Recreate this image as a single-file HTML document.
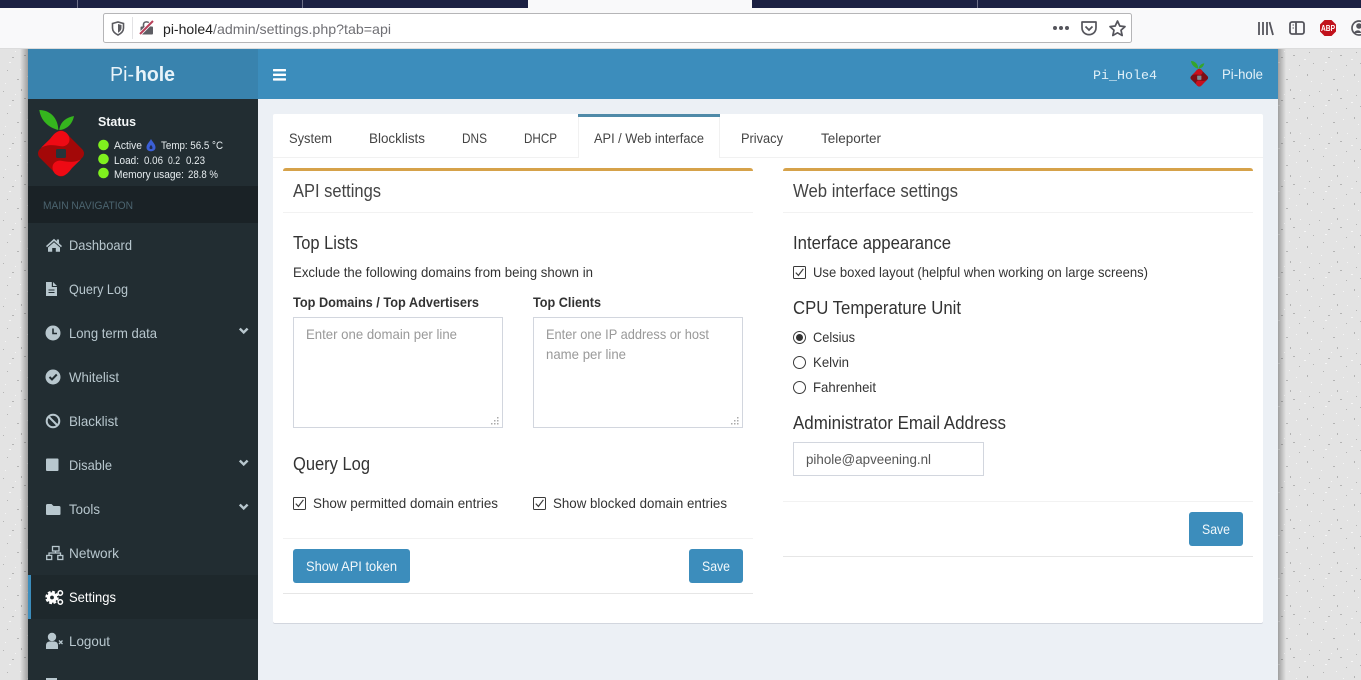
<!DOCTYPE html>
<html lang="en"><head><meta charset="utf-8"><title>Pi-hole Settings</title>
<style>
html,body{margin:0;padding:0;width:1361px;height:680px;overflow:hidden;background:#fff}
svg{display:block;font-family:"Liberation Sans",sans-serif}
text{white-space:pre}
.s14{font-size:14px}.s18{font-size:18px}.s11{font-size:11px}
.d{fill:#444}.n{fill:#b8c7ce;font-size:14px}.p{fill:#999;font-size:14px}.w{fill:#fff}
.b{font-weight:bold}
</style></head><body>
<svg width="1361" height="680" viewBox="0 0 1361 680" xmlns="http://www.w3.org/2000/svg">
<defs>
<pattern id="noise" x="0" y="0" width="47" height="43" patternUnits="userSpaceOnUse">
<g fill="#b4b4b4">
<rect x="3" y="5" width="1" height="1"/><rect x="12" y="14" width="2" height="1"/><rect x="21" y="3" width="1" height="2"/><rect x="30" y="22" width="1" height="1"/><rect x="7" y="27" width="1" height="1"/><rect x="17" y="36" width="2" height="1"/><rect x="40" y="9" width="1" height="1"/><rect x="38" y="31" width="1" height="2"/><rect x="24" y="12" width="2" height="1"/><rect x="44" y="20" width="1" height="1"/>
</g>
<g fill="#f6f6f6">
<rect x="15" y="8" width="1" height="1"/><rect x="35" y="16" width="2" height="1"/><rect x="5" y="40" width="1" height="1"/><rect x="27" y="33" width="1" height="1"/><rect x="9" y="19" width="2" height="1"/><rect x="42" y="38" width="1" height="1"/><rect x="31" y="4" width="1" height="1"/><rect x="20" y="26" width="1" height="1"/>
</g>
</pattern>
<linearGradient id="shL" x1="0" x2="1"><stop offset="0" stop-color="#000" stop-opacity="0"/><stop offset="1" stop-color="#000" stop-opacity=".3"/></linearGradient>
<linearGradient id="shR" x1="1" x2="0"><stop offset="0" stop-color="#000" stop-opacity="0"/><stop offset="1" stop-color="#000" stop-opacity=".3"/></linearGradient>
<symbol id="cb" viewBox="0 0 13 13" overflow="visible">
<rect x=".5" y=".5" width="12" height="12" rx="1" fill="#fff" stroke="#3a3a3a"/>
<path d="M2.8 6.6 L5.4 9.4 L10.4 2.8" fill="none" stroke="#3a3a3a" stroke-width="1.2"/>
</symbol>
<g id="grip" fill="#aaa"><rect x="6" y="0" width="1.5" height="1.5"/><rect x="3" y="3" width="1.5" height="1.5"/><rect x="6" y="3" width="1.5" height="1.5"/><rect x="0" y="6" width="1.5" height="1.5"/><rect x="3" y="6" width="1.5" height="1.5"/><rect x="6" y="6" width="1.5" height="1.5"/></g>
<path id="chev" d="M-4.800 -1.600 L-3 -3.300 L0 -0.300 L3 -3.300 L4.800 -1.600 L0 3.100Z"/>
<path id="lobe" d="M61 131 C66 131 69.500 135 69.500 139.500 C69.500 144 65.500 146.800 61 146.300 C55 145.500 49 143.500 41 147.800 L50 139 C53 135 56 131 61 131Z"/>
</defs>

<!-- browser chrome -->
<rect width="1361" height="8" fill="#1c2143"/>
<rect x="528" y="0" width="224" height="8" fill="#f9f9fa"/>
<g fill="#6d7088"><rect x="77" width="1" height="8"/><rect x="302" width="1" height="8"/><rect x="977" width="1" height="8"/></g>
<rect y="8" width="1361" height="40" fill="#f9f9fa"/>
<rect x="103.500" y="13.500" width="1028" height="29" rx="2" fill="#fff" stroke="#b5b5b7"/>
<path d="M112.500 23.500 L118 22 L123.500 23.500 V28 C123.500 31.500 120.500 33.800 118 35 C115.500 33.800 112.500 31.500 112.500 28Z" fill="none" stroke="#5b5b60" stroke-width="1.6"/>
<path d="M118 24 L121.500 25 V28 C121.500 30 119.700 31.800 118 32.700Z" fill="#5b5b60"/>
<rect x="132" y="17" width="1" height="22" fill="#e2e2e4"/>
<rect x="140.500" y="26.500" width="12.500" height="8" rx="1" fill="#5e5e64"/>
<path d="M143.500 27 V24.500 C143.500 21 149.500 21 149.500 24.500 V27" fill="none" stroke="#5e5e64" stroke-width="1.600"/>
<path d="M140 34 L153 21" stroke="#fff" stroke-width="3.600"/>
<path d="M140 34 L153 21" stroke="#b8405a" stroke-width="2"/>
<text x="163" y="34" class="s14" fill="#222" textLength="50" lengthAdjust="spacingAndGlyphs">pi-hole4</text>
<text x="213" y="34" class="s14" fill="#707075" textLength="178" lengthAdjust="spacingAndGlyphs">/admin/settings.php?tab=api</text>
<g fill="#55555c"><circle cx="1055" cy="28" r="2"/><circle cx="1061" cy="28" r="2"/><circle cx="1067" cy="28" r="2"/></g>
<path d="M1082 22 H1096 V27.500 C1096 37 1082 37 1082 27.500Z" fill="none" stroke="#55555c" stroke-width="1.700" stroke-linejoin="round"/>
<path d="M1085.500 26.500 L1089 30 L1092.500 26.500" fill="none" stroke="#55555c" stroke-width="1.700"/>
<path d="M1117.500 21 L1119.800 26 L1125 26.600 L1121 30.200 L1122.200 35.500 L1117.500 32.800 L1112.800 35.500 L1114 30.200 L1110 26.600 L1115.200 26Z" fill="none" stroke="#55555c" stroke-width="1.700" stroke-linejoin="round"/>
<g fill="none" stroke="#55555c" stroke-width="1.800"><path d="M1259 22 V35 M1263 22 V35 M1267 22 V35 M1269.500 22 L1273 35"/><rect x="1290" y="22" width="14" height="12" rx="2"/><path d="M1296 22 V34"/><path d="M1292.500 25 H1294 M1292.500 28 H1294" stroke-width="1"/></g>
<path d="M1324.500 20 H1331.500 L1336 24.500 V31.500 L1331.500 36 H1324.500 L1320 31.500 V24.500Z" fill="#c1121c"/>
<text x="1321" y="31" font-size="8" font-weight="bold" fill="#fff" textLength="14" lengthAdjust="spacingAndGlyphs">ABP</text>
<circle cx="1359" cy="28" r="7" fill="none" stroke="#55555c" stroke-width="1.700"/><circle cx="1359" cy="26" r="2.800" fill="#55555c"/><path d="M1354 33 C1355 29.500 1361 29.500 1361 33Z" fill="#55555c"/>

<!-- page background -->
<rect x="0" y="48" width="28" height="632" fill="#e3e3e3"/>
<rect x="1278" y="48" width="83" height="632" fill="#e3e3e3"/>
<rect y="48" width="1361" height="632" fill="url(#noise)"/>
<rect y="48" width="1361" height="1" fill="#dcdcdc"/>
<rect x="20" y="49" width="8" height="631" fill="url(#shL)"/>
<rect x="1278" y="49" width="8" height="631" fill="url(#shR)"/>

<!-- frame -->
<rect x="28" y="49" width="1250" height="631" fill="#ecf0f5"/>
<rect x="28" y="49" width="1250" height="50" fill="#3c8dbc"/>
<rect x="28" y="49" width="230" height="50" fill="#3983ae"/>
<rect x="28" y="99" width="230" height="581" fill="#222d32"/>
<rect x="28" y="186" width="230" height="37" fill="#1a2226"/>
<rect x="28" y="575" width="230" height="44" fill="#1e282c"/>
<rect x="28" y="575" width="3" height="44" fill="#3c8dbc"/>

<!-- header -->
<text x="110" y="81" font-size="20" fill="#e8f3f9" textLength="24" lengthAdjust="spacingAndGlyphs">Pi-</text>
<text x="135" y="81" font-size="20" font-weight="bold" fill="#e8f3f9" textLength="40" lengthAdjust="spacingAndGlyphs">hole</text>
<g fill="#fff"><rect x="273" y="69" width="13" height="2.400" rx=".6"/><rect x="273" y="73.600" width="13" height="2.400" rx=".6"/><rect x="273" y="78.200" width="13" height="2.400" rx=".6"/></g>
<text x="1093" y="79" font-family="Liberation Mono, monospace" font-size="13" fill="#dff0f8" textLength="64" lengthAdjust="spacingAndGlyphs">Pi_Hole4</text>
<text x="1222" y="79" class="s14" fill="#e4f1f8" textLength="41" lengthAdjust="spacingAndGlyphs">Pi-hole</text>
<g transform="translate(1199.300 77.700) scale(.385) translate(-61 -153.500)">
<path d="M58.300 130 C50 128 41 122 39.300 110 C50 110 58 118 58.300 130Z" fill="#35a52c"/>
<path d="M59.300 130 C60 122 66 117.500 74 116 C72.500 124 67 129.500 59.300 130Z" fill="#35a52c"/>
<rect x="43" y="135.500" width="36" height="36" rx="6" fill="#7d0e16" transform="rotate(45 61 153.500)"/>
<use href="#lobe" fill="#c8101e"/>
<use href="#lobe" fill="#c8101e" transform="rotate(180 61 153.500)"/>
<rect x="55.500" y="148" width="11" height="11" rx="1.500" fill="#7d8c95"/>
</g>

<!-- big logo -->
<path d="M58.300 130 C50 128 41 122 39.300 110 C50 110 58 118 58.300 130Z" fill="#35b51e"/>
<path d="M59.300 130 C60 122 66 117.500 74 116 C72.500 124 67 129.500 59.300 130Z" fill="#35b51e"/>
<rect x="43" y="135.500" width="36" height="36" rx="6" fill="#a30808" transform="rotate(45 61 153.500)"/>
<use href="#lobe" fill="#ee0a14"/>
<use href="#lobe" fill="#ee0a14" transform="rotate(180 61 153.500)"/>
<rect x="56" y="149" width="10" height="9" rx="1.500" fill="#25343a"/>

<!-- status -->
<text x="98" y="126" font-size="13" font-weight="bold" fill="#f4f7f8" textLength="38" lengthAdjust="spacingAndGlyphs">Status</text>
<g fill="#7ff01e"><circle cx="103.500" cy="145" r="5.300"/><circle cx="103.500" cy="159" r="5.300"/><circle cx="103.500" cy="173" r="5.300"/></g>
<path d="M151 139 C152.500 142 155.500 144 155.500 147.500 C155.500 152.500 146.500 152.500 146.500 147.500 C146.500 144 149.500 142 151 139Z" fill="#3b5fd6"/>
<path d="M151 145 C152 146 152.500 147 152.500 148 C152.500 149.500 149.500 149.500 149.500 148 C149.500 147 150 146 151 145Z" fill="#1f2b52"/>
<g class="s11" fill="#e6ecef">
<text x="114" y="149" textLength="28" lengthAdjust="spacingAndGlyphs">Active</text>
<text x="161" y="149" textLength="62" lengthAdjust="spacingAndGlyphs">Temp: 56.5 °C</text>
<text x="114" y="164" textLength="25" lengthAdjust="spacingAndGlyphs">Load:</text>
<text x="144" y="164" textLength="19" lengthAdjust="spacingAndGlyphs">0.06</text>
<text x="168" y="164" textLength="12" lengthAdjust="spacingAndGlyphs">0.2</text>
<text x="186" y="164" textLength="19" lengthAdjust="spacingAndGlyphs">0.23</text>
<text x="114" y="178" textLength="70" lengthAdjust="spacingAndGlyphs">Memory usage:</text>
<text x="188" y="178" textLength="30" lengthAdjust="spacingAndGlyphs">28.8 %</text>
</g>
<text x="43" y="209" font-size="11" fill="#4b646f" textLength="90" lengthAdjust="spacingAndGlyphs">MAIN NAVIGATION</text>

<!-- nav icons -->
<g fill="#b8c7ce">
<path d="M46 246 L54 238.800 L56.800 241.300 V239.500 H59 V243.300 L62 246 L61 247.200 L54 241 L47 247.200Z"/>
<path d="M48 247.500 L54 242.300 L60 247.500 V251.800 H55.800 V248 H52.200 V251.800 H48Z"/>
<path d="M46 282 H51.800 V287 H57 V296 H46Z M53 282 L57 286 H53Z"/>
<rect x="48.500" y="289.500" width="6" height="1" fill="#222d32"/><rect x="48.500" y="292" width="6" height="1" fill="#222d32"/>
<circle cx="53" cy="333" r="7.500"/>
<circle cx="53" cy="377" r="7.500"/>
<rect x="46" y="458.500" width="12.500" height="12.500" rx="1"/>
<path d="M46 505.500 Q46 504 47.500 504 H51.500 L53.500 506 H59 Q60.500 506 60.500 507.500 V514 Q60.500 515 59 515 H47.500 Q46 515 46 514Z"/>
</g>
<path d="M53 328.500 V333.500 H57" fill="none" stroke="#222d32" stroke-width="1.600"/>
<path d="M49.500 377 L52 379.500 L56.800 374.500" fill="none" stroke="#222d32" stroke-width="2"/>
<g fill="none" stroke="#b8c7ce" stroke-width="2"><circle cx="53" cy="421" r="6.300"/><path d="M48.500 416.500 L57.500 425.500"/></g>
<g fill="none" stroke="#b8c7ce" stroke-width="1.300">
<rect x="52.500" y="546.500" width="6.500" height="4.500"/><rect x="46.700" y="555.500" width="5" height="4"/><rect x="57.800" y="555.500" width="5" height="4"/>
<path d="M55.500 551 V553 M49 555.500 V553 H60.500 V555.500"/>
</g>
<circle cx="52" cy="597.500" r="5.200" fill="#fff"/>
<circle cx="52" cy="597.500" r="5.800" fill="none" stroke="#fff" stroke-width="1.800" stroke-dasharray="2.900 1.650"/>
<circle cx="52" cy="597.500" r="1.900" fill="#1e282c"/>
<circle cx="60.300" cy="593" r="2.200" fill="none" stroke="#fff" stroke-width="1.500"/>
<circle cx="60.300" cy="602" r="2.200" fill="none" stroke="#fff" stroke-width="1.500"/>
<g fill="#b8c7ce"><circle cx="52" cy="637" r="4.200"/><path d="M46 649 V645.500 C46 642.500 48 641.500 50 641.500 H54 C56 641.500 58 642.500 58 645.500 V649Z"/><rect x="46" y="678" width="11" height="2"/></g>
<path d="M59 640.500 L62.500 644 M62.500 640.500 L59 644" stroke="#b8c7ce" stroke-width="1.300"/>
<g fill="#b8c7ce"><use href="#chev" x="243.700" y="331"/><use href="#chev" x="243.700" y="463"/><use href="#chev" x="243.700" y="507"/></g>

<!-- nav text -->
<text x="69" y="250" class="n" textLength="63" lengthAdjust="spacingAndGlyphs">Dashboard</text>
<text x="69" y="294" class="n" textLength="59" lengthAdjust="spacingAndGlyphs">Query Log</text>
<text x="69" y="338" class="n" textLength="88" lengthAdjust="spacingAndGlyphs">Long term data</text>
<text x="69" y="382" class="n" textLength="50" lengthAdjust="spacingAndGlyphs">Whitelist</text>
<text x="69" y="426" class="n" textLength="49" lengthAdjust="spacingAndGlyphs">Blacklist</text>
<text x="69" y="470" class="n" textLength="43" lengthAdjust="spacingAndGlyphs">Disable</text>
<text x="69" y="514" class="n" textLength="31" lengthAdjust="spacingAndGlyphs">Tools</text>
<text x="69" y="558" class="n" textLength="50" lengthAdjust="spacingAndGlyphs">Network</text>
<text x="69" y="602" class="s14 w" textLength="47" lengthAdjust="spacingAndGlyphs">Settings</text>
<text x="69" y="646" class="n" textLength="41" lengthAdjust="spacingAndGlyphs">Logout</text>

<!-- card -->
<rect x="273" y="115" width="990" height="509" rx="2" fill="#d2d6de"/>
<rect x="273" y="114" width="990" height="509" rx="2" fill="#fff"/>
<rect x="273" y="157" width="990" height="1" fill="#f1f1f1"/>
<rect x="578" y="117" width="142" height="41" fill="#fff"/>
<rect x="578" y="117" width="1" height="41" fill="#f1f1f1"/><rect x="719" y="117" width="1" height="41" fill="#f1f1f1"/>
<rect x="578" y="114" width="142" height="3" fill="#4f8aa8"/>
<g class="s14" fill="#444">
<text x="289" y="143" textLength="43" lengthAdjust="spacingAndGlyphs">System</text>
<text x="369" y="143" textLength="56" lengthAdjust="spacingAndGlyphs">Blocklists</text>
<text x="462" y="143" textLength="25" lengthAdjust="spacingAndGlyphs">DNS</text>
<text x="524" y="143" textLength="33" lengthAdjust="spacingAndGlyphs">DHCP</text>
<text x="594" y="143" textLength="110" lengthAdjust="spacingAndGlyphs">API / Web interface</text>
<text x="741" y="143" textLength="42" lengthAdjust="spacingAndGlyphs">Privacy</text>
<text x="821" y="143" textLength="60" lengthAdjust="spacingAndGlyphs">Teleporter</text>
</g>

<!-- left box -->
<path d="M283 171 Q283 168 286 168 H750 Q753 168 753 171Z" fill="#d6a24a"/>
<rect x="283" y="212" width="470" height="1" fill="#f2f2f2"/>
<rect x="283" y="538" width="470" height="1" fill="#f2f2f2"/>
<rect x="283" y="593" width="470" height="1" fill="#e6e6e6"/>
<text x="293" y="197" class="s18 d" textLength="88" lengthAdjust="spacingAndGlyphs">API settings</text>
<text x="293" y="249" class="s18" fill="#333" textLength="65" lengthAdjust="spacingAndGlyphs">Top Lists</text>
<text x="293" y="277" class="s14" fill="#333" textLength="300" lengthAdjust="spacingAndGlyphs">Exclude the following domains from being shown in</text>
<text x="293" y="307" class="s14 b" fill="#333" textLength="186" lengthAdjust="spacingAndGlyphs">Top Domains / Top Advertisers</text>
<text x="533" y="307" class="s14 b" fill="#333" textLength="68" lengthAdjust="spacingAndGlyphs">Top Clients</text>
<rect x="293.500" y="317.500" width="209" height="110" fill="#fff" stroke="#d2d6de"/>
<rect x="533.500" y="317.500" width="209" height="110" fill="#fff" stroke="#d2d6de"/>
<use href="#grip" x="491" y="417"/><use href="#grip" x="731" y="417"/>
<text x="306" y="339" class="p" textLength="151" lengthAdjust="spacingAndGlyphs">Enter one domain per line</text>
<text x="546" y="339" class="p" textLength="163" lengthAdjust="spacingAndGlyphs">Enter one IP address or host</text>
<text x="546" y="359" class="p" textLength="80" lengthAdjust="spacingAndGlyphs">name per line</text>
<text x="293" y="470" class="s18" fill="#333" textLength="77" lengthAdjust="spacingAndGlyphs">Query Log</text>
<use href="#cb" x="293" y="497" width="13" height="13"/>
<use href="#cb" x="533" y="497" width="13" height="13"/>
<text x="313" y="508" class="s14" fill="#333" textLength="185" lengthAdjust="spacingAndGlyphs">Show permitted domain entries</text>
<text x="553" y="508" class="s14" fill="#333" textLength="174" lengthAdjust="spacingAndGlyphs">Show blocked domain entries</text>
<rect x="293" y="549" width="117" height="34" rx="3" fill="#3c8dbc"/>
<rect x="689" y="549" width="54" height="34" rx="3" fill="#3c8dbc"/>
<text x="306" y="571" class="s14" fill="#f2f8fb" textLength="91" lengthAdjust="spacingAndGlyphs">Show API token</text>
<text x="702" y="571" class="s14" fill="#f2f8fb" textLength="28" lengthAdjust="spacingAndGlyphs">Save</text>

<!-- right box -->
<path d="M783 171 Q783 168 786 168 H1250 Q1253 168 1253 171Z" fill="#d6a24a"/>
<rect x="783" y="212" width="470" height="1" fill="#f2f2f2"/>
<rect x="783" y="501" width="470" height="1" fill="#f2f2f2"/>
<rect x="783" y="556" width="470" height="1" fill="#e6e6e6"/>
<text x="793" y="197" class="s18 d" textLength="165" lengthAdjust="spacingAndGlyphs">Web interface settings</text>
<text x="793" y="249" class="s18" fill="#333" textLength="158" lengthAdjust="spacingAndGlyphs">Interface appearance</text>
<use href="#cb" x="793" y="266" width="13" height="13"/>
<text x="813" y="277" class="s14" fill="#333" textLength="335" lengthAdjust="spacingAndGlyphs">Use boxed layout (helpful when working on large screens)</text>
<text x="793" y="314" class="s18" fill="#333" textLength="168" lengthAdjust="spacingAndGlyphs">CPU Temperature Unit</text>
<g fill="#fff" stroke="#3a3a3a"><circle cx="799.500" cy="337.500" r="6"/><circle cx="799.500" cy="362.500" r="6"/><circle cx="799.500" cy="387.500" r="6"/></g>
<circle cx="799.500" cy="337.500" r="3.500" fill="#333"/>
<text x="813" y="342" class="s14" fill="#333" textLength="42" lengthAdjust="spacingAndGlyphs">Celsius</text>
<text x="813" y="367" class="s14" fill="#333" textLength="36" lengthAdjust="spacingAndGlyphs">Kelvin</text>
<text x="813" y="392" class="s14" fill="#333" textLength="63" lengthAdjust="spacingAndGlyphs">Fahrenheit</text>
<text x="793" y="429" class="s18" fill="#333" textLength="213" lengthAdjust="spacingAndGlyphs">Administrator Email Address</text>
<rect x="793.500" y="442.500" width="190" height="33" fill="#fff" stroke="#d2d6de"/>
<text x="806" y="464" class="s14" fill="#555" textLength="125" lengthAdjust="spacingAndGlyphs">pihole@apveening.nl</text>
<rect x="1189" y="512" width="54" height="34" rx="3" fill="#3c8dbc"/>
<text x="1202" y="534" class="s14" fill="#f2f8fb" textLength="28" lengthAdjust="spacingAndGlyphs">Save</text>
</svg>
</body></html>
